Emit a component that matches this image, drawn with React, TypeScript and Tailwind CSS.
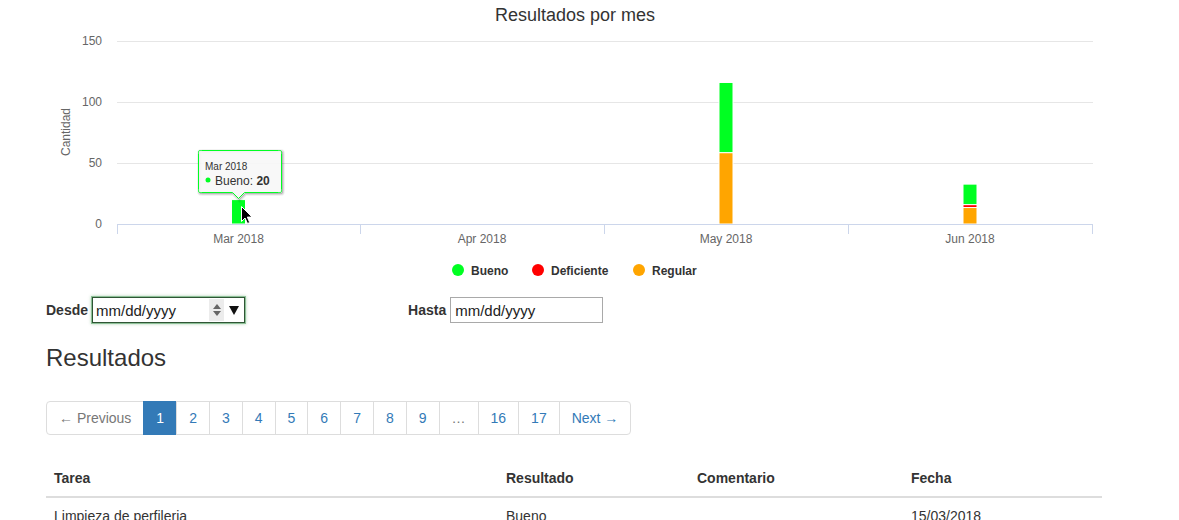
import type { ReactNode } from 'react';

const GREEN = '#00ff22';
const RED = '#ff0000';
const ORANGE = '#ffa500';

const plotLeft = 117;
const plotRight = 1093;
const baseY = 224;
const pxPerUnit = 61 / 50;

type Month = { label: string; center: number; regular: number; deficiente: number; bueno: number };

const months: Month[] = [
  { label: 'Mar 2018', center: 238.5, regular: 0, deficiente: 0, bueno: 20 },
  { label: 'Apr 2018', center: 482, regular: 0, deficiente: 0, bueno: 0 },
  { label: 'May 2018', center: 726, regular: 58.5, deficiente: 0, bueno: 57.5 },
  { label: 'Jun 2018', center: 970, regular: 13.5, deficiente: 2.4, bueno: 16.8 },
];

function Bars({ m }: { m: Month }) {
  const parts = [
    { v: m.regular, c: ORANGE },
    { v: m.deficiente, c: RED },
    { v: m.bueno, c: GREEN },
  ];
  let y = baseY;
  const out: ReactNode[] = [];
  parts.forEach((p, i) => {
    if (!p.v) return;
    const h = p.v * pxPerUnit;
    y -= h;
    out.push(
      <rect key={i} x={m.center - 7} y={y} width={14} height={h} fill={p.c} stroke="#ffffff" strokeWidth={1} />
    );
  });
  return <g>{out}</g>;
}

const tooltipPath =
  'M 201.5 150.5 L 278.5 150.5 C 281.5 150.5 281.5 150.5 281.5 153.5 L 281.5 189.5 C 281.5 192.5 281.5 192.5 278.5 192.5 L 244.5 192.5 L 238.5 198.5 L 232.5 192.5 L 201.5 192.5 C 198.5 192.5 198.5 192.5 198.5 189.5 L 198.5 153.5 C 198.5 150.5 198.5 150.5 201.5 150.5 Z';

function Chart() {
  const ticks = [117.5, 360.5, 604.5, 848.5, 1092.5];
  const yLabels = [
    { t: '150', y: 41 },
    { t: '100', y: 102 },
    { t: '50', y: 163 },
    { t: '0', y: 224 },
  ];
  return (
    <svg width={1179} height={285} className="block">
      <text x={575} y={21} textAnchor="middle" fontSize={18} fill="#333333">
        Resultados por mes
      </text>

      {[41.5, 102.5, 163.5].map((y) => (
        <line key={y} x1={plotLeft} x2={plotRight} y1={y} y2={y} stroke="#e6e6e6" strokeWidth={1} />
      ))}

      {yLabels.map((l) => (
        <text key={l.t} x={102} y={l.y + 4} textAnchor="end" fontSize={12} fill="#666666">
          {l.t}
        </text>
      ))}

      <text x={70} y={132} transform="rotate(-90 70 132)" textAnchor="middle" fontSize={12} fill="#666666">
        Cantidad
      </text>

      {months.map((m) => (
        <Bars key={m.label} m={m} />
      ))}

      <line x1={plotLeft} x2={plotRight} y1={224.5} y2={224.5} stroke="#ccd6eb" strokeWidth={1} />
      {ticks.map((x) => (
        <line key={x} x1={x} x2={x} y1={224} y2={234} stroke="#ccd6eb" strokeWidth={1} />
      ))}

      {months.map((m) => (
        <text key={m.label} x={m.center} y={243} textAnchor="middle" fontSize={12} fill="#666666">
          {m.label}
        </text>
      ))}

      {[
        { cx: 458, c: GREEN, t: 'Bueno' },
        { cx: 538, c: RED, t: 'Deficiente' },
        { cx: 639, c: ORANGE, t: 'Regular' },
      ].map((l) => (
        <g key={l.t}>
          <circle cx={l.cx} cy={270} r={6} fill={l.c} />
          <text x={l.cx + 13} y={274.5} fontSize={12} fontWeight="bold" fill="#333333">
            {l.t}
          </text>
        </g>
      ))}

      {/* tooltip */}
      <g>
        <path d={tooltipPath} transform="translate(1 1)" fill="none" stroke="#000" strokeOpacity={0.05} strokeWidth={5} />
        <path d={tooltipPath} transform="translate(1 1)" fill="none" stroke="#000" strokeOpacity={0.1} strokeWidth={3} />
        <path d={tooltipPath} transform="translate(1 1)" fill="none" stroke="#000" strokeOpacity={0.15} strokeWidth={1} />
        <path d={tooltipPath} fill="rgba(247,247,247,0.9)" stroke={GREEN} strokeWidth={1} />
        <text x={205} y={170} fontSize={10} fill="#333333">
          Mar 2018
        </text>
        <circle cx={208} cy={180} r={2.5} fill={GREEN} />
        <text x={215} y={185} fontSize={12} fill="#333333">
          Bueno: <tspan fontWeight="bold">20</tspan>
        </text>
      </g>

      {/* mouse pointer */}
      <path
        d="M 0 0 L 0 15 L 3.5 11.5 L 6 17 L 8.2 16 L 5.8 10.6 L 10.6 10.6 Z"
        transform="translate(241.5 206.5)"
        fill="#000000"
        stroke="#ffffff"
        strokeWidth={1}
        strokeLinejoin="round"
      />
    </svg>
  );
}

function DateBox({ focused }: { focused?: boolean }) {
  return (
    <div
      className={
        focused
          ? 'relative flex h-[26px] w-[153px] items-center border border-[#2f5535] pl-[3px] shadow-[0_0_0_1px_#8cc096,0_0_3px_1px_rgba(90,160,100,0.45)]'
          : 'relative flex h-[26px] w-[153px] items-center border border-[#a9a9a9] pl-[4px]'
      }
    >
      <span className="text-[15px] leading-none text-[#222]">mm/dd/yyyy</span>
      {focused && (
        <>
          <div className="absolute left-[116px] top-[1px] flex h-[22px] w-[15px] flex-col items-center justify-center gap-[2px] bg-[#ececec]">
            <svg width="8" height="5" viewBox="0 0 8 5">
              <path d="M0 5 L4 0 L8 5 Z" fill="#666" />
            </svg>
            <svg width="8" height="5" viewBox="0 0 8 5">
              <path d="M0 0 L4 5 L8 0 Z" fill="#666" />
            </svg>
          </div>
          <svg className="absolute left-[136px] top-[8px]" width="10" height="9" viewBox="0 0 10 9">
            <path d="M0 0 L10 0 L5 9 Z" fill="#111" />
          </svg>
        </>
      )}
    </div>
  );
}

const pages = ['2', '3', '4', '5', '6', '7', '8', '9'];

export default function App() {
  return (
    <div className="h-[520px] w-[1179px] overflow-hidden bg-white font-['Liberation_Sans',Arial,sans-serif] text-[14px] text-[#333333]">
      <Chart />

      <div className="mt-[12px] flex h-[26px] items-center pl-[46px]">
        <span className="font-bold">Desde</span>
        <div className="ml-[4px]">
          <DateBox focused />
        </div>
        <span className="ml-[163px] font-bold">Hasta</span>
        <div className="ml-[4px]">
          <DateBox />
        </div>
      </div>

      <h3 className="ml-[46px] mt-[22px] text-[24px] leading-[26.4px] font-normal text-[#333]">Resultados</h3>

      <ul className="ml-[46px] mt-[30px] inline-flex leading-[20px]">
        <li className="rounded-l-[4px] border border-[#dddddd] bg-white px-3 py-[6px] text-[#777777]">← Previous</li>
        <li className="-ml-px border border-[#337ab7] bg-[#337ab7] px-3 py-[6px] text-white">1</li>
        {pages.map((p) => (
          <li key={p} className="-ml-px border border-[#dddddd] bg-white px-3 py-[6px] text-[#337ab7]">
            {p}
          </li>
        ))}
        <li className="-ml-px border border-[#dddddd] bg-white px-3 py-[6px] text-[#777777]">…</li>
        <li className="-ml-px border border-[#dddddd] bg-white px-3 py-[6px] text-[#337ab7]">16</li>
        <li className="-ml-px border border-[#dddddd] bg-white px-3 py-[6px] text-[#337ab7]">17</li>
        <li className="-ml-px rounded-r-[4px] border border-[#dddddd] bg-white px-3 py-[6px] text-[#337ab7]">Next →</li>
      </ul>

      <table className="ml-[46px] mt-[25px] w-[1056px] table-fixed border-collapse leading-[20px]">
        <thead>
          <tr>
            <th className="w-[452px] border-b-2 border-[#dddddd] p-2 text-left font-bold">Tarea</th>
            <th className="w-[191px] border-b-2 border-[#dddddd] p-2 text-left font-bold">Resultado</th>
            <th className="w-[214px] border-b-2 border-[#dddddd] p-2 text-left font-bold">Comentario</th>
            <th className="w-[199px] border-b-2 border-[#dddddd] p-2 text-left font-bold">Fecha</th>
          </tr>
        </thead>
        <tbody>
          <tr>
            <td className="p-2">Limpieza de perfileria</td>
            <td className="p-2">Bueno</td>
            <td className="p-2"></td>
            <td className="p-2">15/03/2018</td>
          </tr>
        </tbody>
      </table>
    </div>
  );
}
